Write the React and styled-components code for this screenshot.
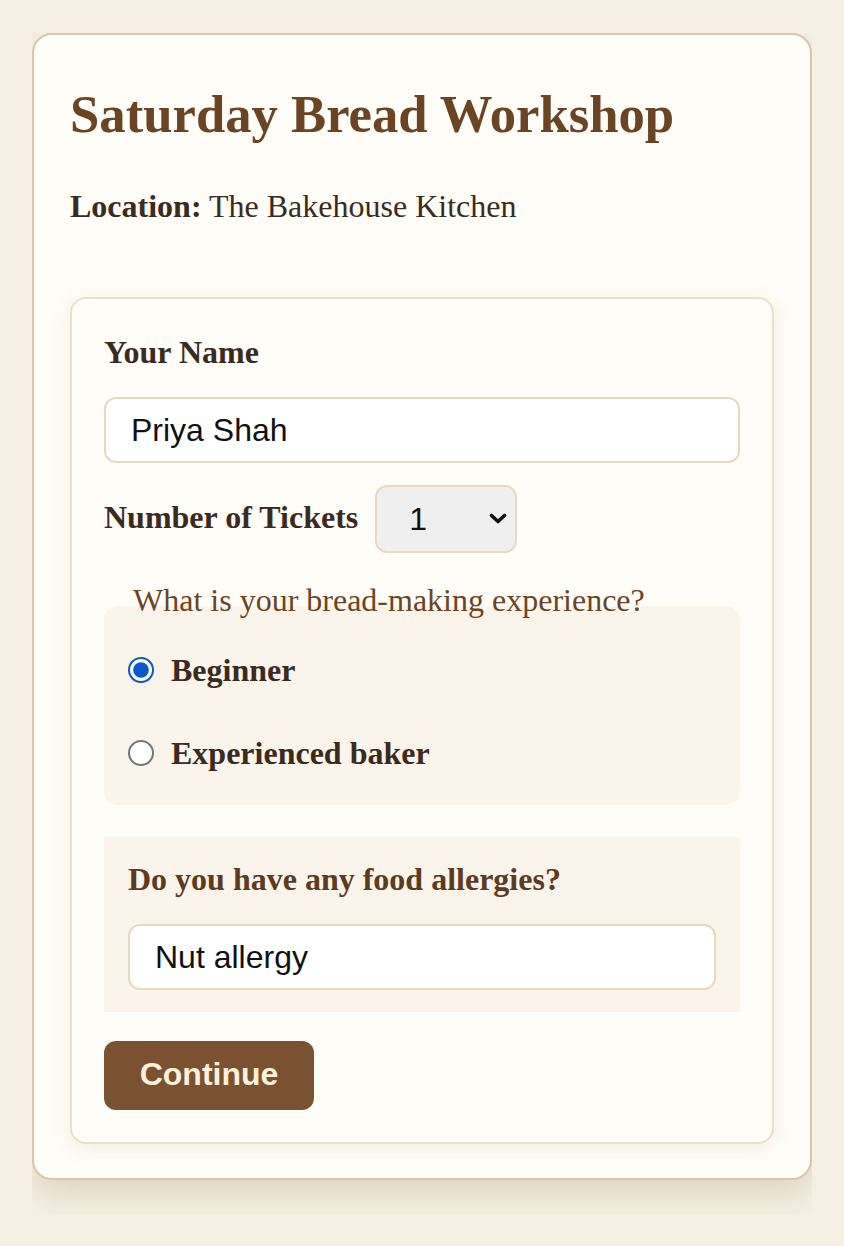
import React, { useState } from 'react';
import styled, { createGlobalStyle } from 'styled-components';

const GlobalStyle = createGlobalStyle`
  html, body {
    margin: 0;
    padding: 0;
    background: #f5efe4;
  }
  body {
    font-family: "Liberation Serif", "Times New Roman", serif;
    color: #3b2b1f;
  }
  * {
    box-sizing: border-box;
  }
`;

const Page = styled.div`
  padding: 33px 32px 0;
`;

// the card's drop shadow is cut off at the card's own width
const ShadowClip = styled.div`
  overflow: hidden;
  padding-bottom: 34px;
`;

const Card = styled.main`
  background: #fffdf7;
  border: 2px solid #dac7a4;
  border-radius: 20px;
  padding: 49px 36px 34px;
  box-shadow: 0 14px 30px rgba(110, 80, 30, 0.16);
`;

const Title = styled.h1`
  margin: 0;
  font-size: 52.7px;
  line-height: 60px;
  font-weight: 700;
  color: #6b4424;
`;

const Location = styled.p`
  margin: 44px 0 72px;
  font-size: 32px;
  line-height: 37px;

  strong {
    font-weight: 700;
  }
`;

const FormCard = styled.form`
  background: #fffdf7;
  border: 2px solid #ecdfc5;
  border-radius: 16px;
  padding: 35px 32px 32px;
  box-shadow: 0 4px 20px rgba(120, 90, 40, 0.1);
`;

const FieldLabel = styled.label`
  display: block;
  font-size: 32px;
  line-height: 37px;
  font-weight: 700;
  color: #3b2b1f;
`;

const TextInput = styled.input`
  display: block;
  width: 100%;
  margin: ${props => props.$top || 0}px 0 0;
  padding: 12px 25px;
  font-family: "Liberation Sans", Arial, sans-serif;
  font-size: 32px;
  line-height: 38px;
  color: #111;
  background: #fff;
  border: 2px solid #e8dbbd;
  border-radius: 12px;
  outline: none;
`;

const TicketRow = styled.div`
  display: flex;
  align-items: center;
  gap: 17px;
  margin-top: 22px;

  ${FieldLabel} {
    margin-top: -3px;
  }
`;

const SelectWrap = styled.div`
  position: relative;
  width: 142px;
  height: 68px;
`;

const Select = styled.select`
  appearance: none;
  width: 100%;
  height: 100%;
  padding: 0 40px 0 32px;
  font-family: "Liberation Sans", Arial, sans-serif;
  font-size: 32px;
  color: #111;
  background: #efefef;
  border: 2px solid #e8dbbd;
  border-radius: 12px;
  cursor: pointer;
`;

const Chevron = styled.svg`
  position: absolute;
  right: 10px;
  top: 28px;
  width: 18px;
  height: 12px;
  pointer-events: none;
`;

const Fieldset = styled.fieldset`
  margin: 29px 0 0;
  padding: 0 24px 10px;
  border: none;
  border-radius: 14px;
  background: #faf4ea;
`;

const Legend = styled.legend`
  padding: 0 5px 10px;
  font-size: 32px;
  line-height: 37px;
  color: #6b4424;
`;

const RadioRow = styled.label`
  display: flex;
  align-items: center;
  gap: 17px;
  height: 83px;
  font-size: 32px;
  font-weight: 700;
  color: #3b2b1f;
  cursor: pointer;
`;

// native radio drawn at double size, as in the original page
const Radio = styled.input`
  zoom: 2;
  width: 13px;
  height: 13px;
  margin: 0 0 1px;
  flex-shrink: 0;
  accent-color: #0b57d0;
  cursor: pointer;
`;

const AllergyBox = styled.section`
  margin-top: 32px;
  padding: 24px 24px 22px;
  background: #faf4ea;
`;

const AllergyHeading = styled.h3`
  margin: 0;
  font-size: 32px;
  line-height: 37px;
  font-weight: 700;
  color: #5c3b20;
`;

const ContinueButton = styled.button`
  display: block;
  margin-top: 29px;
  width: 210px;
  height: 69px;
  padding: 0 0 3px;
  font-family: "Liberation Sans", Arial, sans-serif;
  font-size: 32px;
  font-weight: 700;
  color: #fdf1dc;
  background: #7b5231;
  border: none;
  border-radius: 12px;
  cursor: pointer;
`;

const App = () => {
  const [name, setName] = useState('Priya Shah');
  const [tickets, setTickets] = useState('1');
  const [experience, setExperience] = useState('beginner');
  const [allergies, setAllergies] = useState('Nut allergy');

  return (
    <>
      <GlobalStyle />
      <Page>
        <ShadowClip>
          <Card>
            <Title>Saturday Bread Workshop</Title>
            <Location>
              <strong>Location:</strong> The Bakehouse Kitchen
            </Location>
            <FormCard onSubmit={e => e.preventDefault()}>
              <FieldLabel htmlFor="name">Your Name</FieldLabel>
              <TextInput
                id="name"
                $top={26}
                value={name}
                onChange={e => setName(e.target.value)}
              />
              <TicketRow>
                <FieldLabel htmlFor="tickets">Number of Tickets</FieldLabel>
                <SelectWrap>
                  <Select
                    id="tickets"
                    value={tickets}
                    onChange={e => setTickets(e.target.value)}
                  >
                    <option value="1">1</option>
                    <option value="2">2</option>
                    <option value="3">3</option>
                    <option value="4">4</option>
                  </Select>
                  <Chevron viewBox="0 0 18 12">
                    <path
                      d="M2.5 2.5 L9 8.5 L15.5 2.5"
                      fill="none"
                      stroke="#111"
                      strokeWidth="3.6"
                      strokeLinecap="round"
                      strokeLinejoin="round"
                    />
                  </Chevron>
                </SelectWrap>
              </TicketRow>
              <Fieldset>
                <Legend>What is your bread-making experience?</Legend>
                <RadioRow>
                  <Radio
                    type="radio"
                    name="experience"
                    checked={experience === 'beginner'}
                    onChange={() => setExperience('beginner')}
                  />
                  Beginner
                </RadioRow>
                <RadioRow>
                  <Radio
                    type="radio"
                    name="experience"
                    checked={experience === 'experienced'}
                    onChange={() => setExperience('experienced')}
                  />
                  Experienced baker
                </RadioRow>
              </Fieldset>
              <AllergyBox>
                <AllergyHeading>Do you have any food allergies?</AllergyHeading>
                <TextInput
                  $top={26}
                  value={allergies}
                  onChange={e => setAllergies(e.target.value)}
                />
              </AllergyBox>
              <ContinueButton type="submit">Continue</ContinueButton>
            </FormCard>
          </Card>
        </ShadowClip>
      </Page>
    </>
  );
};

export default App;
